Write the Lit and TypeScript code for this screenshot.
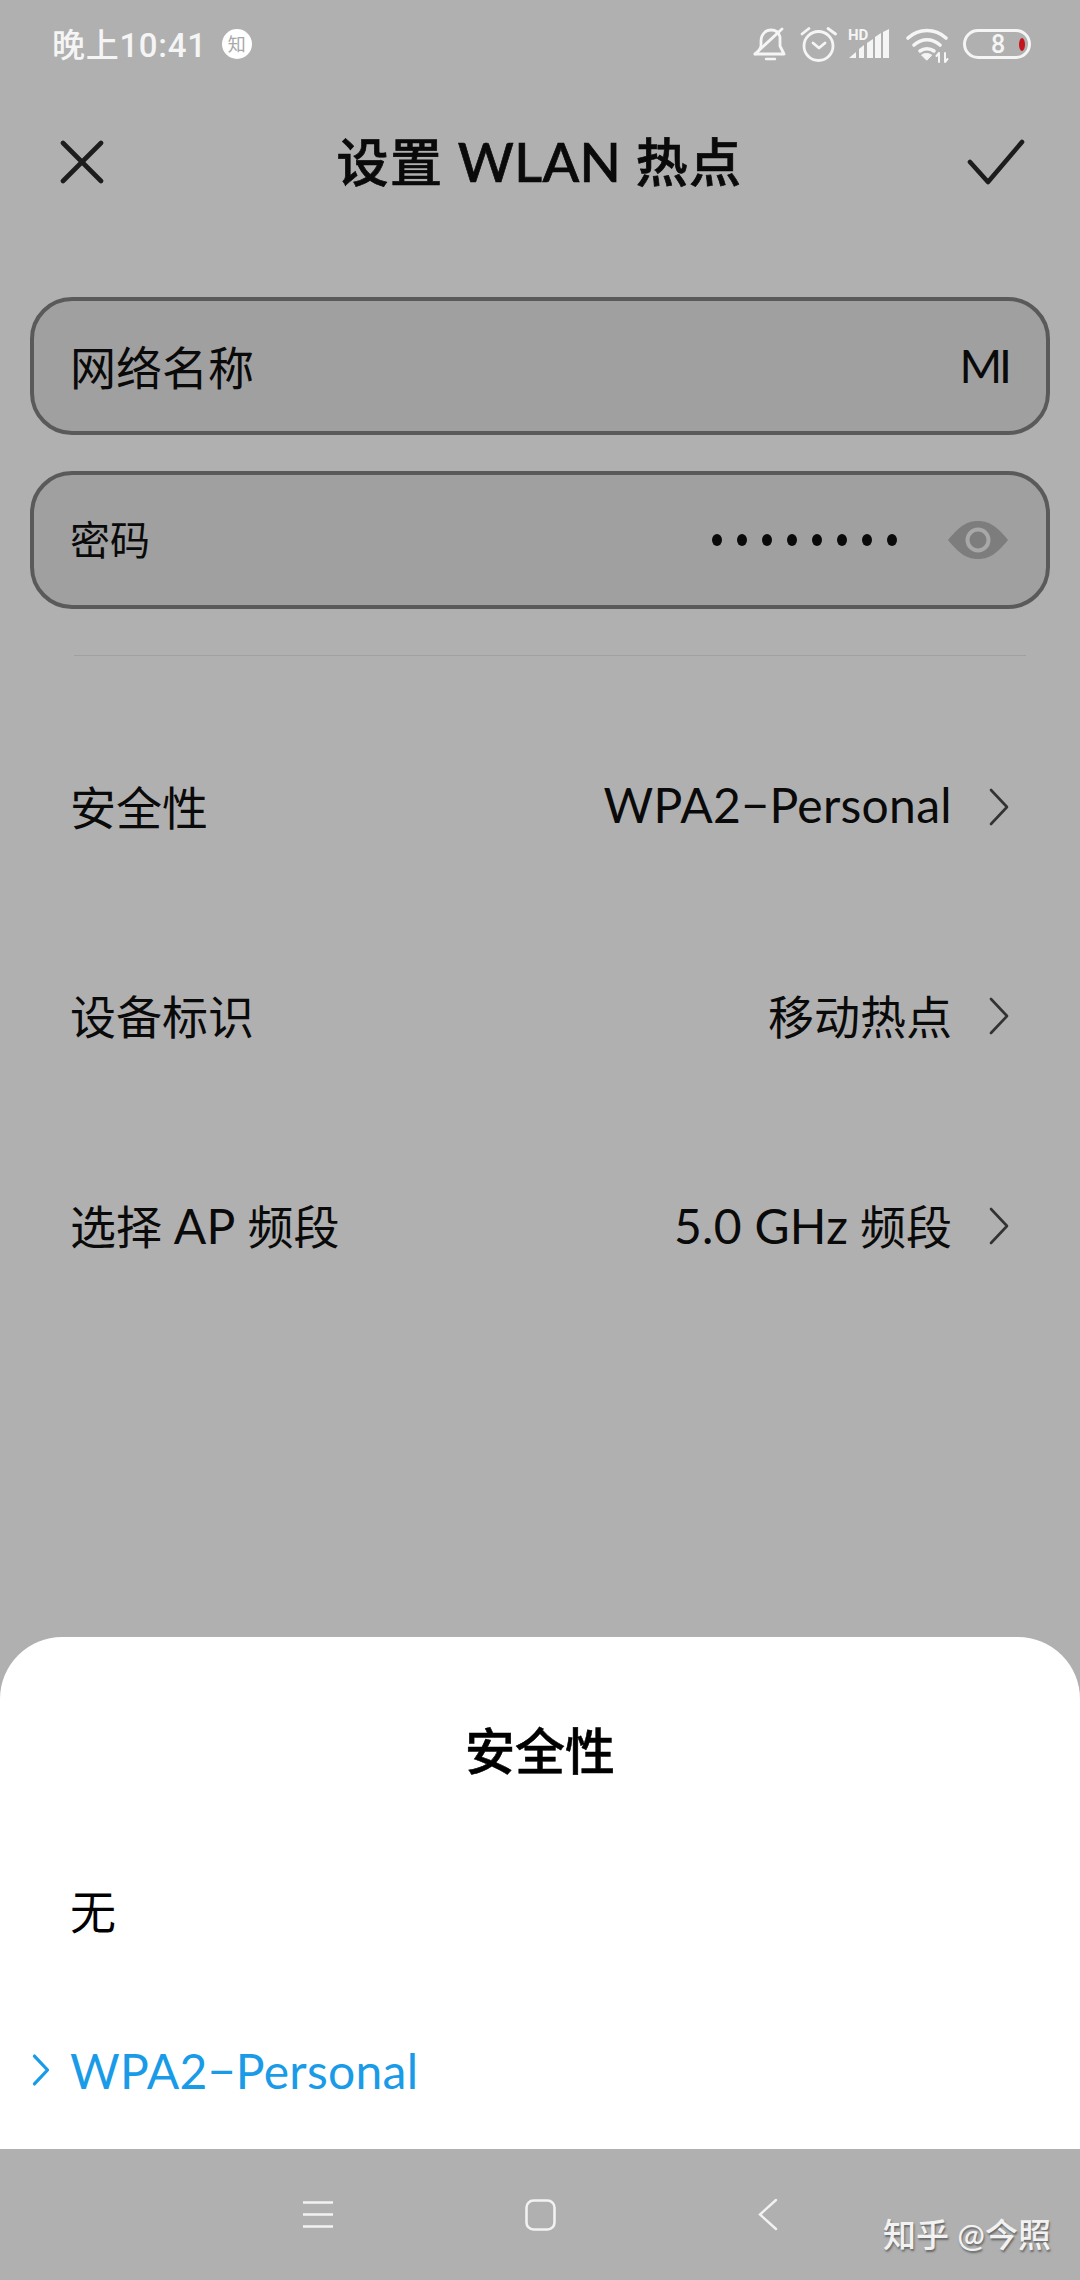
import { LitElement, html, css, svg } from 'lit';
import { customElement } from 'lit/decorators.js';

const chevron = svg`<path d="M3 3 L19 20 L3 37" fill="none" stroke="currentColor" stroke-linecap="round" stroke-linejoin="round"/>`;

@customElement('app-root')
export class AppRoot extends LitElement {
  static styles = css`
    :host {
      display: block;
    }

    .page {
      position: relative;
      display: flex;
      flex-direction: column;
      width: 1080px;
      height: 2280px;
      overflow: hidden;
      background: #b0b0b0;
      color: #0a0a0a;
      font-family: Lato, 'Noto Sans CJK SC', sans-serif;
      font-size: 46px;
    }

    .latin {
      font-size: 48px;
      letter-spacing: 0.3px;
    }

    /* status bar */
    .status {
      display: flex;
      align-items: center;
      height: 88px;
      padding: 0 49px 0 52px;
      box-sizing: border-box;
      color: #f5f5f5;
    }

    .time {
      margin-bottom: 2px;
      font-family: Roboto, 'Noto Sans CJK SC', sans-serif;
      font-size: 33px;
      font-weight: 500;
      letter-spacing: 0.7px;
    }

    .badge {
      display: flex;
      align-items: center;
      justify-content: center;
      width: 30px;
      height: 30px;
      margin: 0 0 1px 15px;
      border-radius: 50%;
      background: #fff;
      color: #a8a8a8;
      font-size: 18px;
      line-height: 1;
    }

    .status-icons {
      display: flex;
      align-items: center;
      gap: 11px;
      margin-left: auto;
    }

    .status-icons svg {
      display: block;
    }

    .battery {
      display: flex;
      align-items: center;
      box-sizing: border-box;
      width: 68px;
      height: 30px;
      border: 3px solid #f5f5f5;
      border-radius: 15px;
      padding: 0 3px 0 25px;
      font-family: Roboto, sans-serif;
      font-size: 25px;
      font-weight: 500;
    }

    .battery-cap {
      width: 6px;
      height: 13px;
      margin-left: auto;
      border-radius: 50%;
      background: #c4161c;
    }

    /* title bar */
    .header {
      display: flex;
      align-items: center;
      justify-content: space-between;
      height: 150px;
      padding: 0 55px 0 60px;
      box-sizing: border-box;
    }

    .header svg {
      display: block;
      margin-bottom: 3px;
      color: #1c1c1c;
    }

    .title {
      margin: 0 0 8px 8px;
      font-size: 52px;
      font-weight: 500;
      letter-spacing: 1.4px;
      -webkit-text-stroke: 0.7px #0a0a0a;
    }

    .title .latin {
      font-size: 54px;
    }

    /* inputs */
    .fields {
      display: flex;
      flex-direction: column;
      gap: 36px;
      margin: 59px 30px 0;
    }

    .field {
      display: flex;
      align-items: center;
      justify-content: space-between;
      box-sizing: border-box;
      height: 138px;
      padding: 0 37px 2px 36px;
      border: 4px solid #5a5a5a;
      border-radius: 42px;
      background: #a0a0a0;
    }

    .field-small {
      margin-bottom: 2px;
      font-size: 40px;
    }

    .mi {
      letter-spacing: -3px;
    }

    .field-value {
      display: flex;
      align-items: center;
      margin: 2px 1px 0 0;
    }

    .dots {
      display: flex;
      gap: 15px;
      margin-right: 51px;
    }

    .dots span {
      width: 10px;
      height: 12px;
      border-radius: 50%;
      background: #0a0a0a;
    }

    .divider {
      height: 1px;
      margin: 46px 54px 47px 74px;
      background: #a0a0a0;
    }

    /* settings rows */
    .row {
      display: flex;
      align-items: center;
      height: 209.5px;
      padding: 0 70px 2px 70px;
      box-sizing: border-box;
    }

    .row span {
      margin-bottom: 4px;
    }

    .row .row-value {
      margin-left: auto;
      margin-right: 36px;
    }

    .row svg {
      display: block;
      stroke-width: 2.6;
      color: #333;
    }

    /* bottom sheet */
    .sheet {
      margin-top: auto;
      padding-top: 34px;
      border-radius: 62px 62px 0 0;
      background: #fff;
    }

    .sheet-title {
      display: flex;
      align-items: center;
      justify-content: center;
      box-sizing: border-box;
      height: 162px;
      padding-bottom: 8px;
      font-size: 50px;
      font-weight: 500;
      color: #000;
      -webkit-text-stroke: 0.5px #000;
    }

    .option {
      position: relative;
      display: flex;
      align-items: center;
      box-sizing: border-box;
      height: 158px;
      padding: 0 0 7px 70px;
      color: #000;
    }

    .option.selected {
      padding-bottom: 0;
      color: #1a9be8;
    }

    .option svg {
      position: absolute;
      left: 32px;
      top: 62px;
      stroke-width: 4;
    }

    /* navigation */
    .nav {
      position: relative;
      display: flex;
      align-items: center;
      justify-content: center;
      gap: 192px;
      height: 131px;
      flex: none;
    }

    .nav svg {
      display: block;
    }

    .nav .back {
      margin-left: 10px;
    }

    .watermark {
      position: absolute;
      right: 29px;
      top: 60px;
      color: #f2f2f2;
      font-size: 33px;
      font-weight: 500;
      text-shadow: 1px 2px 2px #666;
    }
  `;

  render() {
    return html`
      <div class="page">
        <div class="status">
          <span class="time">晚上10:41</span>
          <span class="badge">知</span>
          <div class="status-icons">
            <svg width="36" height="40" viewBox="753 24 36 40" fill="none" stroke="#f5f5f5" stroke-width="2.8" stroke-linecap="round" stroke-linejoin="round">
              <path d="M761 46 V41 C761 34 766 30 771 30 C776 30 779 33 780 37 L780 46 L784 54 H755 C758 52 760 50 761 46"/>
              <path d="M755 54 L782 29"/>
              <path d="M766 59 H775" stroke-width="2.4"/>
            </svg>
            <svg width="37" height="40" viewBox="800 24 37 40" fill="none" stroke="#f5f5f5" stroke-width="2.8" stroke-linecap="round" stroke-linejoin="round">
              <circle cx="818.5" cy="46" r="14.5"/>
              <path d="M813 43 L819 48 L825 43"/>
              <path d="M802 34 L809 28.5"/>
              <path d="M828 28.5 L835.5 34"/>
            </svg>
            <svg width="46" height="40" viewBox="848 24 46 40" fill="#f5f5f5">
              <path d="M849 58 L856 52 V58 Z"/>
              <path d="M859 49 L864 45 V58 H859 Z"/>
              <path d="M867 43 L873 39 V58 H867 Z"/>
              <path d="M875 37 L881 33 V58 H875 Z"/>
              <path d="M883 32 L889 29 V58 H883 Z"/>
              <text x="848" y="40" font-family="Roboto, sans-serif" font-size="15" font-weight="700">HD</text>
            </svg>
            <svg width="47" height="40" viewBox="905 24 47 40" fill="none" stroke="#f5f5f5" stroke-width="3.6" stroke-linecap="round">
              <path d="M908 38 C919 28 935 28 946 38"/>
              <path d="M914 45 C922 38 932 38 940 45"/>
              <path d="M920 51 C924 48 930 48 934 51"/>
              <path d="M926.5 60 L921.5 55 C924 53 929 53 931.5 55 Z" fill="#f5f5f5" stroke-width="1"/>
              <path d="M939 53 V62 M936.5 56 L939 53 M945 53 V62 M945 62 L947.5 59" stroke-width="2"/>
            </svg>
            <div class="battery">8<span class="battery-cap"></span></div>
          </div>
        </div>

        <div class="header">
          <svg width="44" height="44" viewBox="0 0 44 44" fill="none" stroke="currentColor" stroke-width="4.6" stroke-linecap="round">
            <path d="M3 3 L41 41"/>
            <path d="M41 3 L3 41"/>
          </svg>
          <span class="title">设置 <span class="latin">WLAN</span> 热点</span>
          <svg width="58" height="46" viewBox="0 0 58 46" fill="none" stroke="currentColor" stroke-width="4.6" stroke-linecap="round" stroke-linejoin="round">
            <path d="M3 23 L21 43 L55 3"/>
          </svg>
        </div>

        <div class="fields">
          <div class="field">
            <span>网络名称</span>
            <span class="mi">MI</span>
          </div>
          <div class="field">
            <span class="field-small">密码</span>
            <div class="field-value">
              <div class="dots">
                ${Array.from({ length: 8 }, () => html`<span></span>`)}
              </div>
              <svg width="60" height="38" viewBox="0 0 60 38">
                <path d="M0 19 C12 4 20 0 30 0 C40 0 48 4 60 19 C48 34 40 38 30 38 C20 38 12 34 0 19 Z" fill="#7d7d7d"/>
                <circle cx="30" cy="19" r="10.5" fill="none" stroke="#a8a8a8" stroke-width="4"/>
              </svg>
            </div>
          </div>
        </div>

        <div class="divider"></div>

        <div class="row">
          <span>安全性</span>
          <span class="row-value latin">WPA2−Personal</span>
          <svg width="22" height="40" viewBox="0 0 22 40">${chevron}</svg>
        </div>
        <div class="row">
          <span>设备标识</span>
          <span class="row-value">移动热点</span>
          <svg width="22" height="40" viewBox="0 0 22 40">${chevron}</svg>
        </div>
        <div class="row">
          <span>选择 <span class="latin">AP</span> 频段</span>
          <span class="row-value"><span class="latin">5.0 GHz</span> 频段</span>
          <svg width="22" height="40" viewBox="0 0 22 40">${chevron}</svg>
        </div>

        <div class="sheet">
          <div class="sheet-title">安全性</div>
          <div class="option">无</div>
          <div class="option selected latin">
            <svg width="18" height="34" viewBox="0 0 22 40">${chevron}</svg>
            WPA2−Personal
          </div>
        </div>

        <div class="nav">
          <svg width="30" height="27" viewBox="0 0 30 27" stroke="#f2f2f2" stroke-width="2.4">
            <path d="M0 1.5 H30 M0 13.5 H30 M0 25.5 H30"/>
          </svg>
          <svg width="31" height="32" viewBox="0 0 31 32" fill="none" stroke="#f2f2f2" stroke-width="2.6">
            <rect x="1.5" y="1.5" width="28" height="29" rx="7"/>
          </svg>
          <svg class="back" width="20" height="33" viewBox="0 0 20 33" fill="none" stroke="#f2f2f2" stroke-width="2.4" stroke-linecap="round">
            <path d="M18 2 L2 16.5 L18 31"/>
          </svg>
          <span class="watermark">知乎 @今照</span>
        </div>
      </div>
    `;
  }
}
